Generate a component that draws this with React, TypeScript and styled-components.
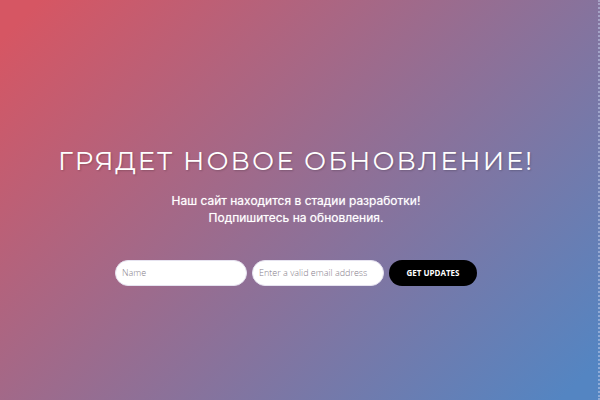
import React from "react";
import styled, { createGlobalStyle } from "styled-components";

function App() {
  return (
    <>
      <GlobalStyle />
      <Layout>
        <Title>ГРЯДЕТ НОВОЕ ОБНОВЛЕНИЕ!</Title>
        <Description>
          Наш сайт находится в стадии разработки!
          <br />
          Подпишитесь на обновления.
        </Description>
        <Form onSubmit={(e) => e.preventDefault()}>
          <Input type="text" name="name" placeholder="Name" aria-label="Name" />
          <Input
            type="email"
            name="email"
            placeholder="Enter a valid email address"
            aria-label="Email"
          />
          <SubmitButton type="submit">GET UPDATES</SubmitButton>
        </Form>
      </Layout>
    </>
  );
}

const GlobalStyle = createGlobalStyle`
  * {
    box-sizing: border-box;
  }
  body {
    margin: 0;
  }
`;

const Layout = styled.main`
  min-height: 100vh;
  padding: 30px 8px 0 2px;
  display: flex;
  flex-direction: column;
  align-items: center;
  justify-content: center;
  color: #fff;
  text-align: center;
  background: linear-gradient(
      135deg,
      #d65663 0%,
      #d65663 4%,
      #946e93 50%,
      #5485c2 96%,
      #5485c2 100%
    )
    border-box;
  border-right: 2px dotted rgba(200, 210, 235, 0.5);
`;

const Title = styled.h1`
  margin: 0;
  font-family: Montserrat, "Open Sans", sans-serif;
  font-size: 26px;
  font-weight: 400;
  line-height: 32px;
  letter-spacing: 2px;
  text-shadow: 1px 1px 2px rgba(0, 0, 0, 0.2);
`;

const Description = styled.p`
  margin: 15px 0 0;
  font-family: Inter, "Liberation Sans", sans-serif;
  font-size: 12px;
  font-weight: 400;
  line-height: 17px;
  text-shadow: 0 0 1px rgba(255, 255, 255, 0.6);
`;

const Form = styled.form`
  margin-top: 34px;
  display: flex;
  gap: 5px;
`;

const Input = styled.input`
  width: 132px;
  height: 26px;
  padding: 0 6px;
  border: 1px solid #e6e3f0;
  border-radius: 13px;
  background: #fff;
  font-family: "Open Sans", sans-serif;
  font-size: 9px;
  font-weight: 300;
  &::placeholder {
    color: #857d8a;
    opacity: 1;
  }
`;

const SubmitButton = styled.button`
  width: 88px;
  height: 26px;
  padding: 0;
  border: none;
  border-radius: 13px;
  background: #000;
  color: #fff;
  font-family: "Open Sans", sans-serif;
  font-size: 8px;
  font-weight: 700;
`;

export default App;
